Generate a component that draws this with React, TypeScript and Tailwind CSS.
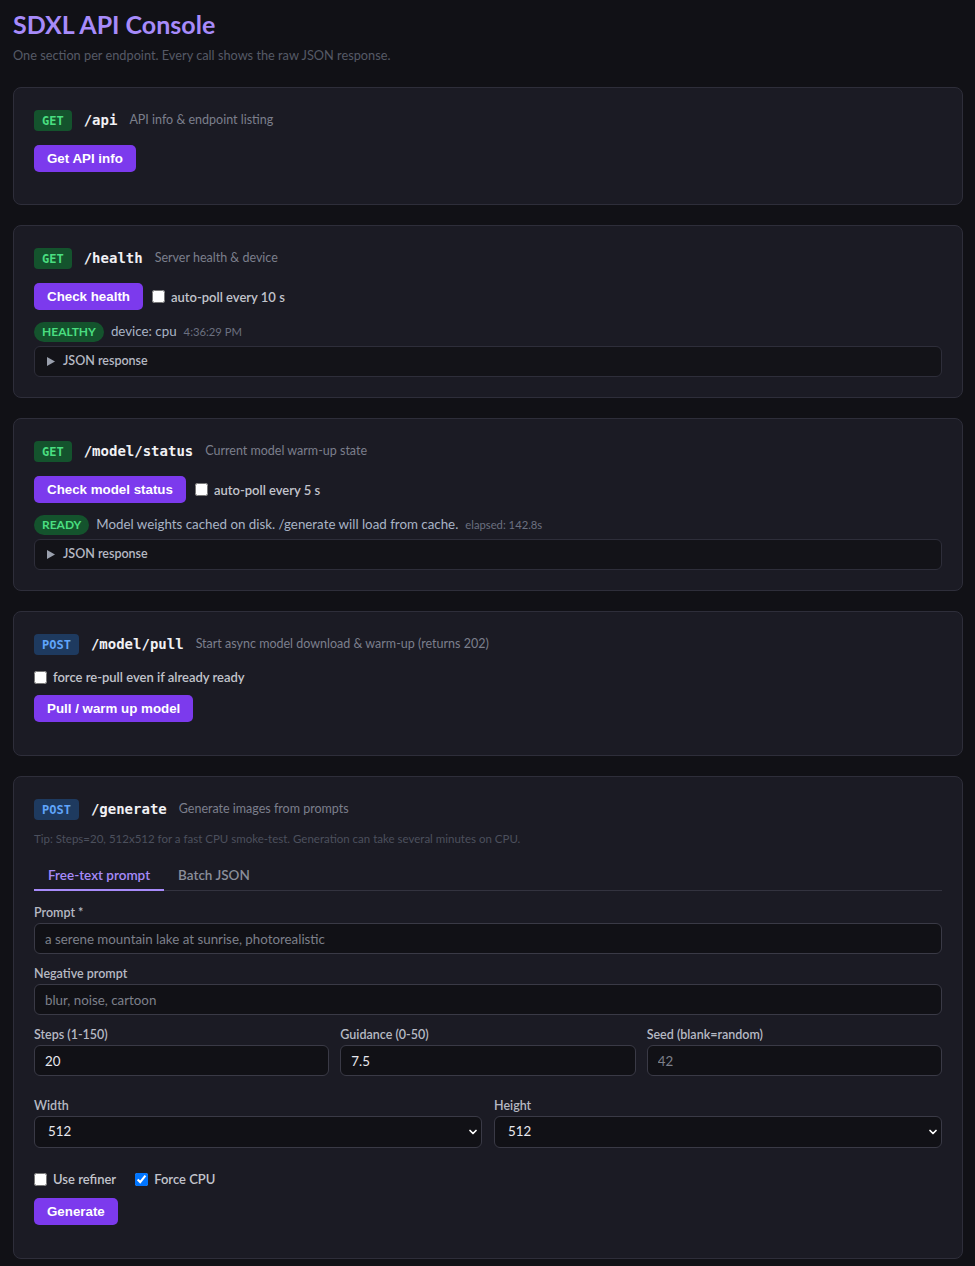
import { ChevronDown } from "lucide-react"

const sans = "font-['Lato','Noto_Sans',sans-serif]"
const mono = "font-['DejaVu_Sans_Mono','Liberation_Mono',monospace]"
const btn = "bg-[#7c3aed] text-white rounded-[5px] px-[13px] h-[27px] text-[13.333px] font-bold font-['Liberation_Sans',Arial,sans-serif]"

function Badge({ method }: { method: "GET" | "POST" }) {
	const cls = method === "GET" ? "bg-[#14532d] text-[#4ade80]" : "bg-[#1e3a5f] text-[#60a5fa]"
	return <span className={`${cls} ${mono} inline-flex items-center h-[21px] px-[8px] rounded-[4px] text-[12px] font-bold`}>{method}</span>
}

function Header({ method, path, desc }: { method: "GET" | "POST"; path: string; desc: string }) {
	return <div className="flex items-center gap-3 h-[25px]">
		<Badge method={method} />
		<span className={`${mono} text-[14px] font-bold text-[#f1f1f4]`}>{path}</span>
		<span className="text-[12.5px] text-[#7b7f8c]">{desc}</span>
	</div>
}

function Card({ children, pb = "pb-5" }: { children: React.ReactNode; pb?: string }) {
	return <div className={`bg-[#1b1b24] border border-[#2e2e3a] rounded-[8px] px-5 pt-5 ${pb}`}>{children}</div>
}

function Check({ label, checked = false }: { label: string; checked?: boolean }) {
	return <label className="flex items-center gap-[6px] text-[13px] font-semibold text-[#c2c4cc] leading-[16px]">
		<input type="checkbox" defaultChecked={checked} className="w-[13px] h-[13px] m-0" />
		{label}
	</label>
}

function JsonBox() {
	return <div className="mt-[4px] h-[31px] flex items-center gap-[8px] px-[12px] bg-[#131318] border border-[#2e2e3a] rounded-[6px] text-[12.5px] font-semibold text-[#b6b9c3]">
		<svg width="8" height="9" viewBox="0 0 8 9" className="text-[#9aa0ad]">
			<polygon points="0,0 8,4.5 0,9" fill="currentColor" />
		</svg>
		JSON response
	</div>
}

function Field({ label, value, placeholder }: { label: string; value?: string; placeholder?: string }) {
	return <div className="flex flex-col gap-[2px]">
		<span className="text-[12.5px] font-semibold text-[#b6b9c3] leading-[16px]">{label}</span>
		<input
			defaultValue={value}
			placeholder={placeholder}
			className="h-[31px] px-[10px] bg-[#111116] border border-[#3a3a46] rounded-[6px] text-[13.333px] text-[#e8e8ee] placeholder:text-[#7d808b] outline-none"
		/>
	</div>
}

function Select({ label, value }: { label: string; value: string }) {
	return <div className="flex flex-col gap-[2px]">
		<span className="text-[12.5px] font-semibold text-[#b6b9c3] leading-[16px]">{label}</span>
		<div className="relative">
			<select defaultValue={value} className="appearance-none w-full h-[32px] px-[13px] bg-[#111116] border border-[#3a3a46] rounded-[6px] text-[13.333px] text-[#e8e8ee] outline-none">
				<option>256</option>
				<option>512</option>
				<option>768</option>
				<option>1024</option>
			</select>
			<ChevronDown size={12} strokeWidth={3.5} className="absolute right-[3px] top-[10px] text-white pointer-events-none" />
		</div>
	</div>
}

export default function App() {
	return <div className={`min-h-screen bg-[#111116] ${sans} pl-[13px] pr-3 pt-[8px] pb-3`}>
		<h1 className="text-[25px] font-bold text-[#a78bfa] leading-[32px]">SDXL API Console</h1>
		<p className="text-[12.75px] text-[#565a66] mt-[6px]">One section per endpoint. Every call shows the raw JSON response.</p>

		<div className="flex flex-col gap-[20px] mt-[22px]">
			{/* /api */}
			<Card pb="pb-[32px]">
				<Header method="GET" path="/api" desc="API info & endpoint listing" />
				<button className={`${btn} mt-[12px]`}>Get API info</button>
			</Card>

			{/* /health */}
			<Card>
				<Header method="GET" path="/health" desc="Server health & device" />
				<div className="flex items-center gap-[9px] mt-[12px]">
					<button className={btn}>Check health</button>
					<Check label="auto-poll every 10 s" />
				</div>
				<div className="flex items-center gap-[7px] mt-[12px]">
					<span className="h-[20px] px-[8px] inline-flex items-center rounded-full bg-[#14532d] text-[#4ade80] text-[12px] font-bold">HEALTHY</span>
					<span className="text-[13.333px] text-[#a9b4c6]">device: cpu</span>
					<span className="text-[11.25px] text-[#6b7080]">4:36:29 PM</span>
				</div>
				<JsonBox />
			</Card>

			{/* /model/status */}
			<Card>
				<Header method="GET" path="/model/status" desc="Current model warm-up state" />
				<div className="flex items-center gap-[9px] mt-[12px]">
					<button className={btn}>Check model status</button>
					<Check label="auto-poll every 5 s" />
				</div>
				<div className="flex items-center gap-[7px] mt-[12px]">
					<span className="h-[20px] px-[8px] inline-flex items-center rounded-full bg-[#14532d] text-[#4ade80] text-[12px] font-bold">READY</span>
					<span className="text-[13.333px] text-[#a9b4c6]">Model weights cached on disk. /generate will load from cache.</span>
					<span className="text-[11.25px] text-[#6b7080]">elapsed: 142.8s</span>
				</div>
				<JsonBox />
			</Card>

			{/* /model/pull */}
			<Card pb="pb-[33px]">
				<Header method="POST" path="/model/pull" desc="Start async model download & warm-up (returns 202)" />
				<div className="mt-[12px]">
					<Check label="force re-pull even if already ready" />
				</div>
				<button className={`${btn} mt-[10px]`}>Pull / warm up model</button>
			</Card>

			{/* /generate */}
			<Card pb="pb-[33px]">
				<Header method="POST" path="/generate" desc="Generate images from prompts" />
				<p className="text-[11.5px] text-[#4c505d] mt-[8px]">Tip: Steps=20, 512x512 for a fast CPU smoke-test. Generation can take several minutes on CPU.</p>
				<div className="flex border-b border-[#33333f] mt-[19px] text-[13.5px] font-semibold leading-[18px]">
					<span className="px-[14px] pb-[5px] text-[#a78bfa] border-b-2 border-[#a78bfa] -mb-px">Free-text prompt</span>
					<span className="px-[14px] pb-[5px] text-[#8a8e9a]">Batch JSON</span>
				</div>
				<div className="flex flex-col gap-[12px] mt-[14px]">
					<Field label="Prompt *" placeholder="a serene mountain lake at sunrise, photorealistic" />
					<Field label="Negative prompt" placeholder="blur, noise, cartoon" />
					<div className="grid grid-cols-3 gap-[11px]">
						<Field label="Steps (1-150)" value="20" />
						<Field label="Guidance (0-50)" value="7.5" />
						<Field label="Seed (blank=random)" placeholder="42" />
					</div>
				</div>
				<div className="grid grid-cols-2 gap-[12px] mt-[22px]">
					<Select label="Width" value="512" />
					<Select label="Height" value="512" />
				</div>
				<div className="flex items-center gap-[19px] mt-[23px]">
					<Check label="Use refiner" />
					<Check label="Force CPU" checked />
				</div>
				<button className={`${btn} mt-[11px]`}>Generate</button>
			</Card>
		</div>
	</div>
}
